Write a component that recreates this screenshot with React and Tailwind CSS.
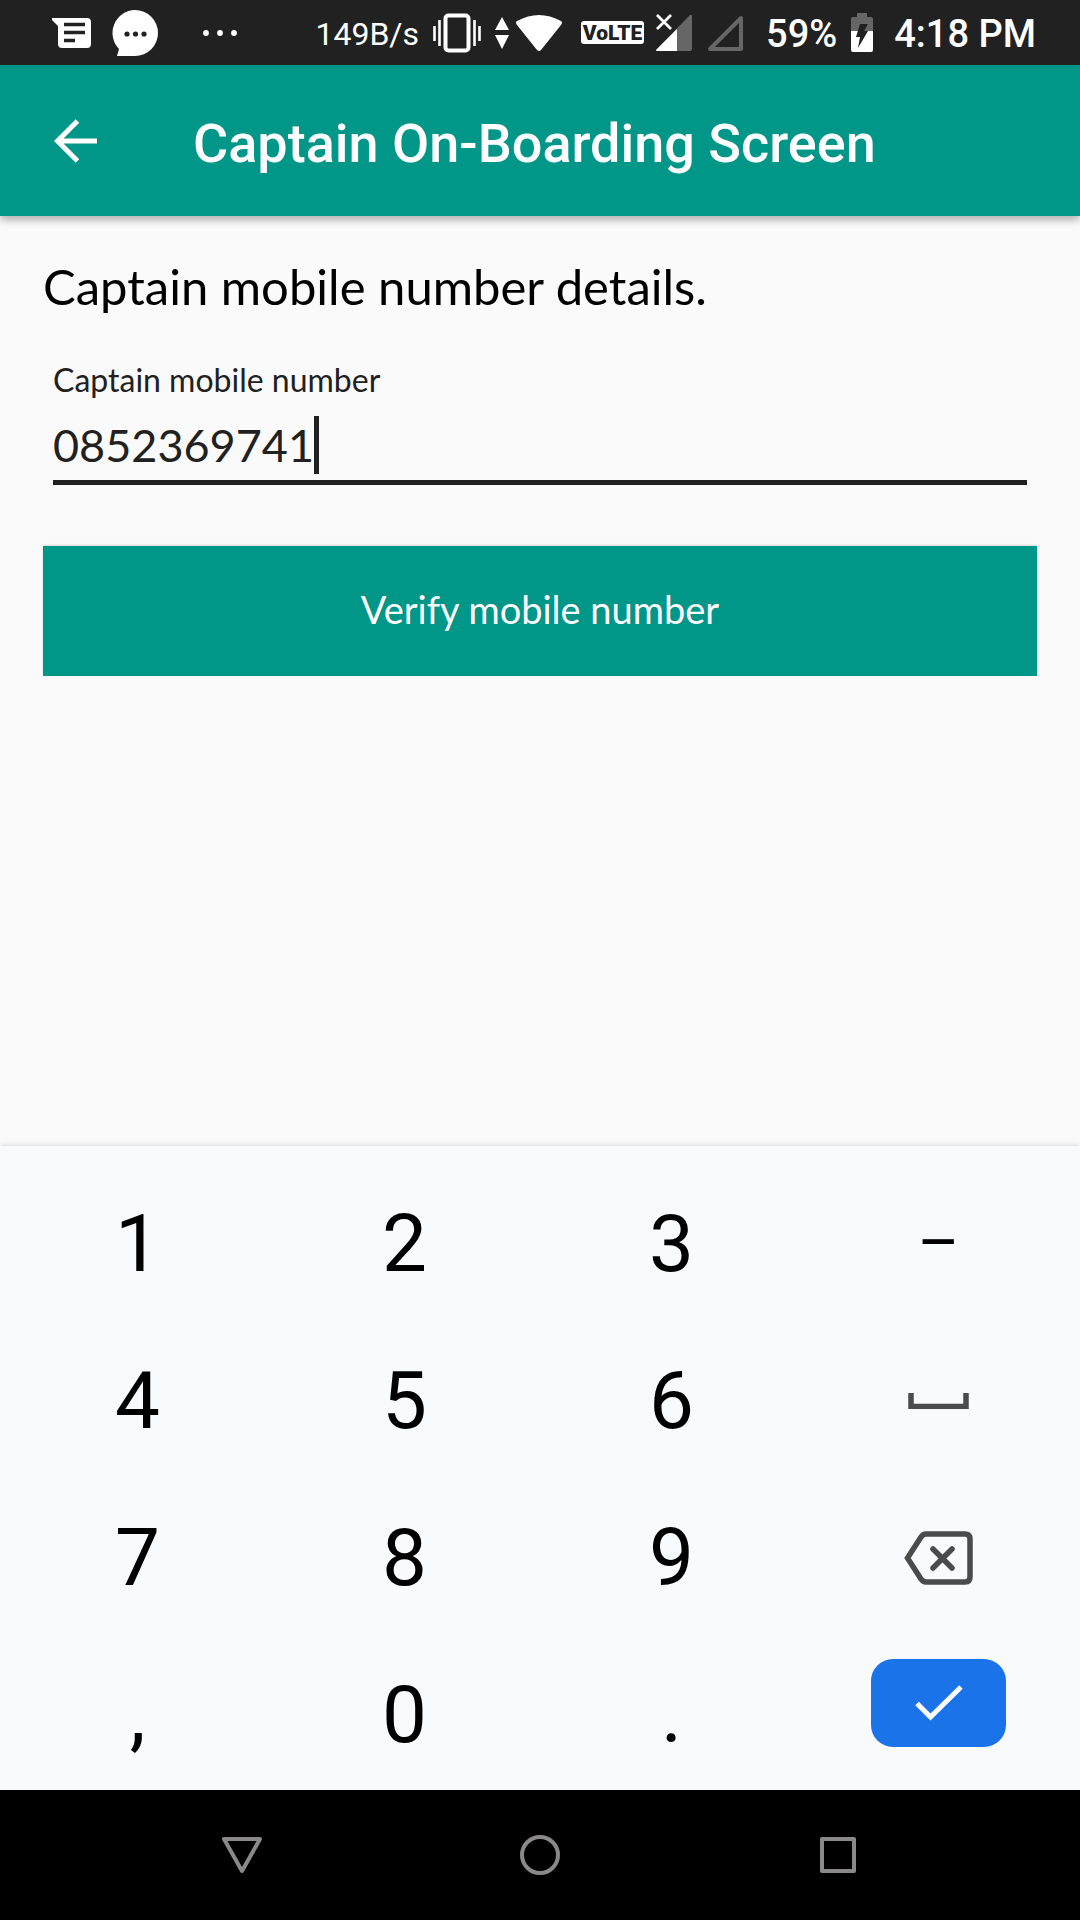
import { useState } from "react";

function StatusBar() {
  return (
    <div className="flex h-[65px] shrink-0 items-center bg-[#212121] pl-[51px] pr-[44px] font-['Roboto',sans-serif] text-white">
      <svg className="h-8 w-10" viewBox="0 0 40 32" aria-hidden="true">
        <path d="M1 1H36a4 4 0 0 1 4 4V27a4 4 0 0 1-4 4H11a4 4 0 0 1-4-4V9L1 3Z" fill="#fff" />
        <path d="M13 7.500H34M13 15.500H34M13 23.500H24" stroke="#212121" strokeWidth="3.400" />
      </svg>
      <svg className="ml-[21px] h-[46px] w-[46px]" viewBox="0 0 46 46" aria-hidden="true">
        <path d="M23 0a23 23 0 0 1 0 46H5l2-7A23 23 0 0 1 23 0Z" fill="#fff" />
        <g fill="#212121">
          <circle cx="15" cy="24" r="2.600" />
          <circle cx="23.500" cy="24" r="2.600" />
          <circle cx="32" cy="24" r="2.600" />
        </g>
      </svg>
      <svg className="ml-[44px] h-2 w-9" viewBox="0 0 36 8" fill="#fff" aria-hidden="true">
        <circle cx="4" cy="4" r="2.900" />
        <circle cx="18" cy="4" r="2.900" />
        <circle cx="32" cy="4" r="2.900" />
      </svg>
      <div className="ml-auto flex items-center">
        <span className="pt-[2px] text-[32px] leading-10">149B/s</span>
        <svg className="ml-[14px] h-10 w-12" viewBox="0 0 48 40" fill="none" stroke="#fff" aria-hidden="true">
          <rect x="12.500" y="2.500" width="23" height="35" rx="3" strokeWidth="4" />
          <path d="M1.500 13V28M6.500 7V33M41.500 7V33M46.500 13V28" strokeWidth="2.600" />
        </svg>
        <svg className="ml-[14px] h-8 w-[14px]" viewBox="0 0 14 32" fill="#fff" aria-hidden="true">
          <path d="M7 0 14 13H0ZM7 32 0 18H14Z" />
        </svg>
        <svg className="ml-[6px] h-[38px] w-[48px]" viewBox="0 0 48 38" fill="#fff" aria-hidden="true">
          <path d="M2 7Q0 8 2 11L22 36Q24 38 26 36L46 11Q48 8 46 7Q24-5 2 7Z" />
        </svg>
        <span className="ml-[18px] flex h-[23px] w-[63px] items-center justify-center rounded-[3px] bg-white pt-px text-[21px] font-black leading-none text-[#212121]">
          VoLTE
        </span>
        <svg className="ml-3 h-[38px] w-9" viewBox="0 0 36 38" aria-hidden="true">
          <path d="M0 36 34 1Q36 0 36 2V35Q36 37 34 37H1Q0 37 0 36Z" fill="#666" />
          <path d="M0 36 21 15V37H1Q0 37 0 36Z" fill="#fff" />
          <path d="M1 1 15 15M15 1 1 15" stroke="#212121" strokeWidth="7" />
          <path d="M1 1 15 15M15 1 1 15" stroke="#fff" strokeWidth="2.800" />
        </svg>
        <svg className="ml-[15px] h-[38px] w-9" viewBox="0 0 36 38" fill="none" aria-hidden="true">
          <path d="M3 35 34 4V35Z" stroke="#666" strokeWidth="4" strokeLinejoin="round" />
        </svg>
        <span className="ml-[23px] pt-[2px] text-[38px] font-medium leading-10">59%</span>
        <svg className="ml-[14px] h-10 w-[22px]" viewBox="0 0 22 40" aria-hidden="true">
          <path d="M6 0H16V4H20Q22 4 22 6V19H0V6Q0 4 2 4H6Z" fill="#666" />
          <path d="M0 18H22V37Q22 39 20 39H2Q0 39 0 37Z" fill="#fff" />
          <path d="M9 11H17L13 18H17L7 35L9 24H5Z" fill="#212121" />
        </svg>
        <span className="ml-[21px] pt-[2px] text-[38px] font-medium leading-10">4:18 PM</span>
      </div>
    </div>
  );
}

function AppBar() {
  return (
    <header className="z-10 flex h-[151px] shrink-0 items-center bg-[#009688] px-[54px] text-white shadow-[0_4px_8px_rgba(0,0,0,0.3)]">
      <button type="button" aria-label="Back">
        <svg className="h-[44px] w-[44px]" viewBox="0 0 44 44" fill="none" stroke="#fff" strokeWidth="5" aria-hidden="true">
          <path d="M43 22H4M23.500 2 3.500 22 23.500 42" />
        </svg>
      </button>
      <h1 className="ml-[95px] mt-[6px] font-['Roboto',sans-serif] text-[54px] font-medium leading-[64px]">
        Captain On-Boarding Screen
      </h1>
    </header>
  );
}

function MobileForm() {
  const [mobile, setMobile] = useState("0852369741");
  return (
    <form
      className="flex flex-1 flex-col bg-[#fafafa] px-[43px] pt-[38px] font-['Lato',sans-serif]"
      onSubmit={(e) => e.preventDefault()}
    >
      <h2 className="text-[49px] leading-[64px] text-black">Captain mobile number details.</h2>
      <div className="mx-[10px] mt-[42px] flex flex-col text-[#212121]">
        <label htmlFor="mobile" className="text-[32px] leading-10">
          Captain mobile number
        </label>
        <div className="mt-4 flex h-[69px] items-start border-b-[5px] border-[#212121]">
          <input
            id="mobile"
            type="tel"
            value={mobile}
            onChange={(e) => setMobile(e.target.value)}
            className="h-[58px] bg-transparent text-[45px] leading-[58px] outline-none [field-sizing:content]"
          />
          <span className="h-[58px] w-[5px] bg-[#212121]" aria-hidden="true" />
        </div>
      </div>
      <button
        type="submit"
        className="mt-[61px] h-[130px] bg-[#009688] pb-1 text-[38px] leading-[48px] text-white shadow-[0_-1px_2px_rgba(0,0,0,0.15)]"
      >
        Verify mobile number
      </button>
    </form>
  );
}

function Key({ children, label }) {
  return (
    <button type="button" aria-label={label} className="flex h-[150px] items-center justify-center">
      {children}
    </button>
  );
}

function SpaceIcon() {
  return (
    <svg className="h-4 w-[61px]" viewBox="0 0 61 16" fill="none" aria-hidden="true">
      <path d="M3 0V13.500H58V0" stroke="#4a4c4b" strokeWidth="5.500" />
    </svg>
  );
}

function BackspaceIcon() {
  return (
    <svg className="h-[54px] w-[69px]" viewBox="0 0 69 54" fill="none" stroke="#4a4c4b" strokeWidth="5.500" aria-hidden="true">
      <path d="M22 3H61Q66 3 66 8V46Q66 51 61 51H22Q19 51 17 48L3.500 27 17 6Q19 3 22 3Z" />
      <path d="M29 18 48 37M48 18 29 37" strokeLinecap="round" />
    </svg>
  );
}

function Keypad() {
  return (
    <section
      aria-label="Numeric keyboard"
      className="grid shrink-0 grid-cols-4 gap-y-[7px] bg-[#f8fafc] pl-1 pr-2 pt-[23px] font-['Roboto',sans-serif] text-[80px] leading-none text-black shadow-[0_-1px_5px_rgba(0,0,0,0.12)]"
    >
      <Key>1</Key>
      <Key>2</Key>
      <Key>3</Key>
      <Key><span className="text-[64px]">–</span></Key>
      <Key>4</Key>
      <Key>5</Key>
      <Key>6</Key>
      <Key label="Space"><SpaceIcon /></Key>
      <Key>7</Key>
      <Key>8</Key>
      <Key>9</Key>
      <Key label="Backspace"><BackspaceIcon /></Key>
      <Key>,</Key>
      <Key>0</Key>
      <Key>.</Key>
      <Key label="Done">
        <span className="mb-6 flex h-[88px] w-[135px] items-center justify-center rounded-[22px] bg-[#1a73e8]">
          <svg className="h-9 w-12" viewBox="0 0 48 36" fill="none" stroke="#fff" strokeWidth="5" aria-hidden="true">
            <path d="M2 18.500 15.500 32 46 2" />
          </svg>
        </span>
      </Key>
    </section>
  );
}

function NavBar() {
  return (
    <nav className="grid h-[130px] shrink-0 grid-cols-3 bg-black px-[93px]">
      <button type="button" aria-label="Back" className="flex items-center justify-center">
        <svg className="h-10 w-10" viewBox="0 0 40 40" fill="none" stroke="#8a8888" strokeWidth="4" strokeLinejoin="round" aria-hidden="true">
          <path d="M2 4H38L20 36Z" />
        </svg>
      </button>
      <button type="button" aria-label="Home" className="flex items-center justify-center">
        <svg className="h-10 w-10" viewBox="0 0 40 40" fill="none" stroke="#8a8888" strokeWidth="4" aria-hidden="true">
          <circle cx="20" cy="20" r="18" />
        </svg>
      </button>
      <button type="button" aria-label="Recent apps" className="flex items-center justify-center">
        <svg className="h-10 w-10" viewBox="0 0 40 40" fill="none" stroke="#8a8888" strokeWidth="4" strokeLinejoin="round" aria-hidden="true">
          <rect x="4" y="4" width="32" height="32" />
        </svg>
      </button>
    </nav>
  );
}

export default function App() {
  return (
    <main className="flex min-h-screen flex-col bg-[#fafafa]">
      <StatusBar />
      <AppBar />
      <MobileForm />
      <Keypad />
      <NavBar />
    </main>
  );
}
